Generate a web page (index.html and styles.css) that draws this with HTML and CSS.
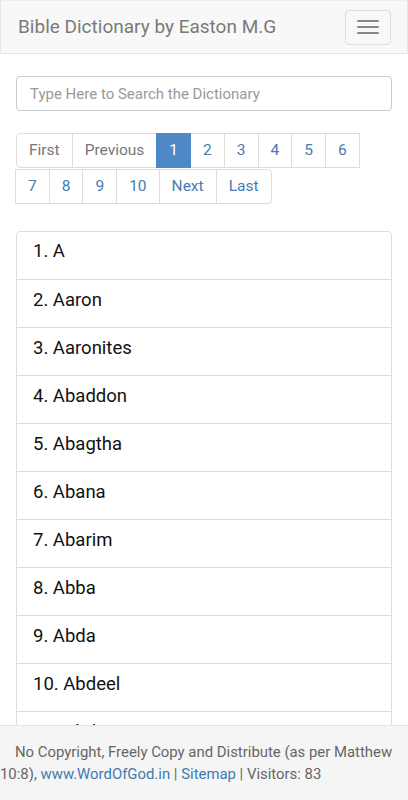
FILE: index.html
```html
<!DOCTYPE html>
<html>
<head>
<meta charset="utf-8">
<link rel="stylesheet" href="styles.css">
</head>
<body>
<nav class="navbar">
  <span class="brand">Bible Dictionary by Easton M.G</span>
  <button class="toggle"><span class="bar"></span><span class="bar"></span><span class="bar"></span></button>
</nav>
<main class="container">
  <input class="search" type="text" placeholder="Type Here to Search the Dictionary">
  <ul class="pagination">
    <li class="disabled first"><a>First</a></li>
    <li class="disabled"><a>Previous</a></li>
    <li class="active"><a>1</a></li>
    <li><a>2</a></li>
    <li><a>3</a></li>
    <li><a>4</a></li>
    <li><a>5</a></li>
    <li><a>6</a></li>
    <li><a>7</a></li>
    <li><a>8</a></li>
    <li><a>9</a></li>
    <li><a>10</a></li>
    <li><a>Next</a></li>
    <li class="last"><a>Last</a></li>
  </ul>
  <div class="list">
    <div class="item">1. A</div>
    <div class="item">2. Aaron</div>
    <div class="item">3. Aaronites</div>
    <div class="item">4. Abaddon</div>
    <div class="item">5. Abagtha</div>
    <div class="item">6. Abana</div>
    <div class="item">7. Abarim</div>
    <div class="item">8. Abba</div>
    <div class="item">9. Abda</div>
    <div class="item">10. Abdeel</div>
    <div class="item">11. Abdi</div>
    <div class="item">12. Abdiel</div>
  </div>
</main>
<footer class="footer">
  <p class="foot-text">No Copyright, Freely Copy and Distribute (as per Matthew 10:8), <a href="#">www.WordOfGod.in</a> | <a href="#">Sitemap</a> | Visitors: 83</p>
</footer>
</body>
</html>
```
FILE: styles.css
```css
* { box-sizing: border-box; }
html, body { margin: 0; padding: 0; }
body {
  font-family: Roboto, "Liberation Sans", sans-serif;
  font-size: 15px;
  line-height: 1.42857;
  color: #333;
  background: #fff;
  width: 408px;
}
.navbar {
  height: 54px;
  background: #f8f8f8;
  border: 1px solid #e7e7e7;
  border-top-color: #eee;
  display: flex;
  align-items: center;
  justify-content: space-between;
  padding: 0 16px 0 17px;
}
.brand {
  font-size: 19px;
  color: #7a7a7a;
  line-height: 20px;
}
.toggle {
  width: 46px;
  height: 35px;
  border: 1px solid #ddd;
  border-radius: 4px;
  background: transparent;
  display: flex;
  flex-direction: column;
  align-items: center;
  justify-content: center;
  gap: 4px;
  padding: 0;
}
.toggle .bar {
  display: block;
  width: 22px;
  height: 2px;
  background: #888;
  border-radius: 1px;
}
.container {
  padding: 22px 16px 120px 16px;
}
.search {
  display: block;
  width: 100%;
  height: 35px;
  padding: 6px 13px;
  font-family: inherit;
  font-size: 15px;
  border: 1px solid #ccc;
  border-radius: 4px;
  color: #555;
  outline: none;
}
.search::placeholder { color: #999; }
.pagination {
  list-style: none;
  margin: 22px 0 27px 0;
  padding: 0;
  display: flex;
  flex-wrap: wrap;
  width: 365px;
  font-size: 15.5px;
}
.pagination li a {
  display: block;
  padding: 6px 12px;
  height: 35px;
  line-height: 21px;
  color: #4a7bb0;
  border: 1px solid #ddd;
  margin-left: -1px;
  background: #fff;
}
.pagination li.first a { margin-left: 0; border-radius: 4px 0 0 4px; }
.pagination li.last a { border-radius: 0 4px 4px 0; }
.pagination li.disabled a { color: #777; }
.pagination li.active a { background: #4f88c6; border-color: #4f88c6; color: #fff; position: relative; z-index: 1; }
.pagination li:nth-child(n+9) { margin-top: 1px; }
.list {
  border: 1px solid #ddd;
  border-radius: 4px;
}
.item {
  height: 48px;
  padding: 7px 16px 13px 16px;
  font-size: 18.5px;
  line-height: 27px;
  color: #111;
  border-top: 1px solid #ddd;
}
.item:first-child { border-top: 0; height: 47px; padding-top: 6px; }
.footer {
  position: fixed;
  left: 0;
  right: 0;
  bottom: 0;
  height: 75px;
  background: #f5f5f5;
  border-top: 1px solid #e5e5e5;
  padding: 15px 0 0 0;
}
.foot-text {
  margin: 0;
  font-size: 14.9px;
  line-height: 22px;
  color: #666;
  text-indent: 15px;
}
.foot-text a { color: #3f7ab3; text-decoration: none; }
```
